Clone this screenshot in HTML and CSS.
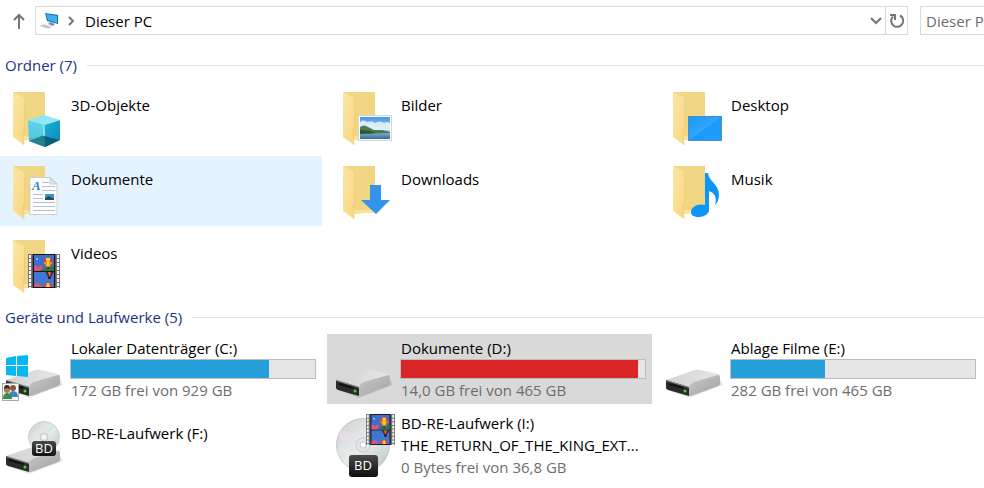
FILE: index.html
```
<!DOCTYPE html>
<html lang="de">
<head>
  <meta charset="UTF-8" />
  <meta name="viewport" content="width=device-width, initial-scale=1.0" />
  <title>Dieser PC</title>
  <link rel="stylesheet" href="styles.css">
</head>
<body>
  <!-- Shared icon parts -->
  <svg class="sprite" aria-hidden="true">
    <defs>
      <linearGradient id="folderBack" x1="0" y1="0" x2="1" y2="1">
        <stop offset="0" stop-color="#f0d688" />
        <stop offset="1" stop-color="#f1d57f" />
      </linearGradient>
      <linearGradient id="folderFlap" x1="0" y1="0" x2="1" y2="1">
        <stop offset="0" stop-color="#fce6a6" />
        <stop offset="1" stop-color="#f8d67f" />
      </linearGradient>
      <linearGradient id="driveTop" x1="0" y1="0" x2="1" y2="0">
        <stop offset="0" stop-color="#d3d3d5" />
        <stop offset="1" stop-color="#e6e6e8" />
      </linearGradient>
      <linearGradient id="driveSide" x1="0" y1="0" x2="1" y2="1">
        <stop offset="0" stop-color="#c8c8ca" />
        <stop offset="1" stop-color="#a2a2a5" />
      </linearGradient>
      <linearGradient id="disc" x1="0" y1="0" x2="1" y2="1">
        <stop offset="0" stop-color="#c6cbcb" />
        <stop offset="0.3" stop-color="#dfe2e2" />
        <stop offset="0.5" stop-color="#e9ecec" />
        <stop offset="0.8" stop-color="#cbd6d0" />
        <stop offset="1" stop-color="#b4bbba" />
      </linearGradient>
      <linearGradient id="label" x1="0" y1="0" x2="0" y2="1">
        <stop offset="0" stop-color="#4b4b4b" />
        <stop offset="0.5" stop-color="#2b2b2b" />
        <stop offset="1" stop-color="#111" />
      </linearGradient>
      <linearGradient id="sky" x1="0" y1="0" x2="0" y2="1">
        <stop offset="0" stop-color="#4a98e6" />
        <stop offset="1" stop-color="#d6ecfa" />
      </linearGradient>
      <linearGradient id="sea" x1="0" y1="0" x2="0" y2="1">
        <stop offset="0" stop-color="#8fb8cf" />
        <stop offset="1" stop-color="#2f6a95" />
      </linearGradient>
      <linearGradient id="screen" x1="0" y1="0" x2="1" y2="1">
        <stop offset="0" stop-color="#1a98f6" />
        <stop offset="0.5" stop-color="#30a6fc" />
        <stop offset="0.51" stop-color="#1c9afa" />
        <stop offset="1" stop-color="#1f9dfa" />
      </linearGradient>
      <linearGradient id="cubeLeft" x1="0" y1="0" x2="0" y2="1">
        <stop offset="0" stop-color="#5fd3ea" />
        <stop offset="0.6" stop-color="#55cbe3" />
        <stop offset="1" stop-color="#2f9aa8" />
      </linearGradient>
      <linearGradient id="cubeRight" x1="0" y1="0" x2="1" y2="1">
        <stop offset="0" stop-color="#1fb2dc" />
        <stop offset="1" stop-color="#0a86b5" />
      </linearGradient>
    </defs>

    <symbol id="folder" viewBox="0 0 66 70">
      <path d="M13 10H45V56L24 58Z" fill="url(#folderBack)" />
      <path d="M24 54H45V57H24Z" fill="#fbe29b" />
      <path d="M13 10L24 16Q25 17 25 18V48L23 49L24 63L13 55Z" fill="url(#folderFlap)" />
      <path d="M24.500 17V48L23 49L24 63" fill="none" stroke="#ecca6f" stroke-width="0.7" />
    </symbol>

    <symbol id="drive" viewBox="0 0 66 70">
      <path d="M8 56L29 64L63 51L60 45Z" fill="#000" opacity="0.1" />
      <path d="M6 46L35 36Q38 35 41 36L58 40Q60 41 60 43L30 54Z" fill="url(#driveTop)" />
      <path d="M29 53L31 50Q32 49 34 48L58 41Q60 41 60 43V50Q60 51 58 52L31 62L29 62Z" fill="url(#driveSide)" />
      <path d="M6 46L29 53V62L8 56Q6 55 6 54Z" fill="#2b2b2b" />
      <path d="M6 46L29 53V54L6 47Z" fill="#8a8a8a" />
      <path d="M9 50L23 54" stroke="#111" stroke-width="2" />
      <circle cx="25" cy="57" r="1.500" fill="#2fe02f" />
    </symbol>

    <symbol id="film" viewBox="0 0 32 34">
      <rect width="32" height="34" fill="#777" />
      <path d="M2 1V34M30 1V34" stroke="#f5f5f5" stroke-width="2" stroke-dasharray="3 1" />
      <rect x="4" y="0" width="24" height="34" fill="#5a5a5a" />
      <rect x="5" y="0" width="22" height="34" fill="#16161c" />
      <rect x="6" y="1" width="20" height="16" fill="#3a6fcb" />
      <rect x="6" y="18" width="20" height="15" fill="#3f78d4" />
      <path d="M6 12Q8 10 10 13L13 11L16 17H6Z" fill="#d9547c" />
      <path d="M14 15L20 14L26 12V17H12Z" fill="#2d7a35" />
      <path d="M6 31Q9 27 12 30L14 33H6Z" fill="#d9547c" />
      <circle cx="20" cy="8" r="4.500" fill="#e8402c" />
      <path d="M18 4H22L21 13H19Z" fill="#ffd42e" />
      <path d="M15.500 8H18L20 13H19ZM22 8H24.500L21 13H20Z" fill="#f0a01d" />
      <rect x="19" y="13" width="2" height="2" fill="#6b2d12" />
      <path d="M17.500 18H26L23 23H20Z" fill="#5a2038" />
      <path d="M20 18H23L22 22H21Z" fill="#d9742c" />
      <rect x="20" y="23" width="3" height="2" fill="#331a14" />
      <path d="M15.500 33A4.500 4.500 0 0 1 24.500 33Z" fill="#e8402c" />
      <path d="M18 33L19 29H21L22 33Z" fill="#ffd42e" />
      <circle cx="9" cy="5" r="1" fill="#b8d3f5" />
    </symbol>
  </svg>

  <header class="toolbar">
    <button class="up-btn" type="button" aria-label="Nach oben">
      <svg width="14" height="18" viewBox="0 0 14 18"><path d="M7 17V3M2 8L7 3L12 8" fill="none" stroke="#757575" stroke-width="2" /></svg>
    </button>
    <nav class="address">
      <svg class="pc-icon" width="20" height="18" viewBox="0 0 20 18">
        <path d="M6 1L19 3V12L8 9Z" fill="#1c6ea8" />
        <path d="M7 2L18 4V11L9 8Z" fill="#3bb0f5" />
        <path d="M11 10L16 12L14 14L9 12Z" fill="#7d8d99" />
        <path d="M0 14L5 12L14 15L9 17Z" fill="#d5dadd" />
        <path d="M2 14L5 13L12 15L9 16Z" fill="#b9c2c8" />
      </svg>
      <svg class="crumb-arrow" width="8" height="12" viewBox="0 0 8 12"><path d="M2 2L6 6L2 10" fill="none" stroke="#777" stroke-width="2" /></svg>
      <a class="crumb" href="#">Dieser PC</a>
      <button class="history-btn" type="button" aria-label="Vorherige Orte">
        <svg width="12" height="8" viewBox="0 0 12 8"><path d="M1 1L6 6L11 1" fill="none" stroke="#757575" stroke-width="2" /></svg>
      </button>
      <button class="refresh-btn" type="button" aria-label="Aktualisieren">
        <svg width="16" height="16" viewBox="0 0 16 16">
          <path d="M11 2.500A6 6 0 1 1 4 3.500" fill="none" stroke="#757575" stroke-width="2" />
          <path d="M1 2H6V7" fill="none" stroke="#757575" stroke-width="2" />
        </svg>
      </button>
    </nav>
    <input class="search" type="text" placeholder="Dieser PC" aria-label="Dieser PC">
  </header>

  <main>
    <section>
      <h2>Ordner (7)</h2>
      <ul class="grid folders">
        <li>
          <a class="item" href="#">
            <svg class="icon" viewBox="0 0 66 70">
              <use href="#folder" />
              <path d="M28 38L44 43L45 65L29 59Z" fill="url(#cubeLeft)" />
              <path d="M44 43L60 38V58L45 65Z" fill="url(#cubeRight)" />
              <path d="M28 38L44 33L60 38L44 43Z" fill="#8fe6f5" />
              <path d="M29 59L44 53L45 65Z" fill="#23808c" />
              <path d="M44 54L60 58L45 65Z" fill="#0b5f7c" />
              <path d="M44 43V54" stroke="#c9f4fb" stroke-width="1" />
            </svg>
            <span class="name">3D-Objekte</span>
          </a>
        </li>
        <li>
          <a class="item" href="#">
            <svg class="icon" viewBox="0 0 66 70">
              <use href="#folder" />
              <rect x="28.500" y="33.500" width="33" height="25" fill="#fff" stroke="#d3d6d9" />
              <rect x="30" y="35" width="30" height="22" fill="url(#sky)" />
              <path d="M30 40Q33 37 37 40Q42 38 45 41Q50 38 54 41Q58 39 60 41V48H30Z" fill="#f3f9fd" opacity="0.8" />
              <rect x="30" y="50" width="30" height="7" fill="url(#sea)" />
              <path d="M30 45Q34 42 38 45L44 48L52 48L60 50V51L30 52Z" fill="#4d7a52" />
              <path d="M30 48L40 49L46 51L30 52Z" fill="#2d5538" />
            </svg>
            <span class="name">Bilder</span>
          </a>
        </li>
        <li>
          <a class="item" href="#">
            <svg class="icon" viewBox="0 0 66 70">
              <use href="#folder" />
              <rect x="28.500" y="34.500" width="33" height="24" fill="url(#screen)" stroke="#4d8fc0" />
            </svg>
            <span class="name">Desktop</span>
          </a>
        </li>
        <li>
          <a class="item hover" href="#">
            <svg class="icon" viewBox="0 0 66 70">
              <use href="#folder" />
              <path d="M30 21.500H50L57 28V58.500H30Z" fill="#fdfdfd" stroke="#c3c8cc" stroke-width="0.8" />
              <path d="M50 21.500V28H57Z" fill="#e3e6e8" stroke="#b5babd" stroke-width="0.7" />
              <text class="doc-letter" x="32" y="34">A</text>
              <path d="M42 26.500H49M42 30.500H55M42 34.500H55M33 38.500H43M33 42.500H43M33 46.500H55M33 50.500H55M33 54.500H55" stroke="#b9c0c8" />
              <rect x="45" y="38" width="9" height="6" fill="#3b93d8" />
              <path d="M45 42L49 40L54 43V44H45Z" fill="#2b4d50" />
            </svg>
            <span class="name">Dokumente</span>
          </a>
        </li>
        <li>
          <a class="item" href="#">
            <svg class="icon" viewBox="0 0 66 70">
              <use href="#folder" />
              <path d="M40 29H51V44H60L46 58L31 44H40Z" fill="#3294ea" />
            </svg>
            <span class="name">Downloads</span>
          </a>
        </li>
        <li>
          <a class="item" href="#">
            <svg class="icon" viewBox="0 0 66 70">
              <use href="#folder" />
              <path d="M45 17H48C49 26 59 28 59 39Q59 45 55 49Q58 38 49 35V54C49 58 44 61 39 61C34 61 31 59 31 56C31 51 38 47 45 49Z" fill="#0c96f8" />
            </svg>
            <span class="name">Musik</span>
          </a>
        </li>
        <li>
          <a class="item" href="#">
            <svg class="icon" viewBox="0 0 66 70">
              <use href="#folder" />
              <use href="#film" x="28" y="24" width="32" height="34" />
            </svg>
            <span class="name">Videos</span>
          </a>
        </li>
      </ul>
    </section>

    <section>
      <h2>Geräte und Laufwerke (5)</h2>
      <ul class="grid drives">
        <li>
          <a class="item" href="#">
            <svg class="icon" viewBox="0 0 66 70">
              <use href="#drive" />
              <path d="M6 24L16 22V31H6ZM17 22L28 21V31H17ZM6 32H16V42L6 41ZM17 32H28V43L17 42Z" fill="#06b8f1" />
              <rect x="2.500" y="49.500" width="16" height="17" fill="#f4f6f7" stroke="#a5a8aa" />
              <circle cx="13" cy="54" r="3" fill="#8a5a3a" />
              <path d="M9 63Q9 57 13 57Q18 57 18 63Z" fill="#3c86bd" />
              <circle cx="7" cy="56" r="3" fill="#b07a55" />
              <path d="M4 55Q4 51 7 51Q10 51 10 55L7 54Z" fill="#3d2b20" />
              <path d="M3 65Q3 59 7 59Q12 59 12 65Z" fill="#3a8a56" />
            </svg>
            <div class="details">
              <span class="name">Lokaler Datenträger (C:)</span>
              <progress value="754" max="929" aria-label="Belegter Speicher C:"></progress>
              <span class="free">172 GB frei von 929 GB</span>
            </div>
          </a>
        </li>
        <li>
          <a class="item selected" href="#">
            <svg class="icon" viewBox="0 0 66 70"><use href="#drive" /></svg>
            <div class="details">
              <span class="name">Dokumente (D:)</span>
              <progress class="full" value="451" max="465" aria-label="Belegter Speicher D:"></progress>
              <span class="free">14,0 GB frei von 465 GB</span>
            </div>
          </a>
        </li>
        <li>
          <a class="item" href="#">
            <svg class="icon" viewBox="0 0 66 70"><use href="#drive" /></svg>
            <div class="details">
              <span class="name">Ablage Filme (E:)</span>
              <progress value="180" max="465" aria-label="Belegter Speicher E:"></progress>
              <span class="free">282 GB frei von 465 GB</span>
            </div>
          </a>
        </li>
        <li>
          <a class="item" href="#">
            <svg class="icon" viewBox="0 0 66 70">
              <use href="#drive" />
              <circle cx="44" cy="27" r="15.500" fill="url(#disc)" stroke="#ccd0d0" />
              <path d="M46 24L54 15" stroke="#c5ecd4" stroke-width="2" />
              <circle cx="44" cy="27" r="4" fill="#e6e8e8" stroke="#c4c7c7" />
              <circle cx="44" cy="27" r="1.500" fill="#fff" />
              <rect x="32" y="31" width="24" height="15" rx="3" fill="url(#label)" />
              <text class="bd" x="44" y="43">BD</text>
            </svg>
            <span class="name">BD-RE-Laufwerk (F:)</span>
          </a>
        </li>
        <li>
          <a class="item" href="#">
            <svg class="icon" viewBox="0 0 66 70">
              <circle cx="33" cy="35" r="26.500" fill="url(#disc)" stroke="#c6caca" />
              <path d="M8 27L27 33L28 31L12 19Z" fill="#eddcec" opacity="0.7" />
              <circle cx="33" cy="35" r="7" fill="#e3e6e6" stroke="#c6caca" />
              <circle cx="33" cy="35" r="3" fill="#fff" stroke="#c6caca" />
              <use href="#film" x="36" y="4" width="29" height="31" />
              <rect x="19" y="45" width="29" height="22" rx="3" fill="url(#label)" />
              <text class="bd" x="33" y="60">BD</text>
            </svg>
            <div class="details">
              <span class="name">BD-RE-Laufwerk (I:)</span>
              <span class="name">THE_RETURN_OF_THE_KING_EXT...</span>
              <span class="free">0 Bytes frei von 36,8 GB</span>
            </div>
          </a>
        </li>
      </ul>
    </section>
  </main>
</body>
</html>
```
FILE: styles.css
```
:root {
  --text: #000;
  --muted: #6d6d6d;
  --heading: #1e3287;
  --line: #d9d9d9;
  --bar-blue: #26a0da;
  --bar-red: #da2626;
}

* {
  box-sizing: border-box;
}

body {
  margin: 0;
  font-family: 'Open Sans', 'Noto Sans', sans-serif;
  font-size: 15px;
  line-height: 22px;
  background-color: #fff;
  color: var(--text);
}

.sprite {
  position: absolute;
  width: 0;
  height: 0;
}

button {
  display: flex;
  align-items: center;
  justify-content: center;
  padding: 0;
  border: none;
  background: none;
  cursor: pointer;
}

.toolbar {
  display: flex;
  overflow: hidden;
  padding-top: 6px;
}

.up-btn {
  width: 35px;
  padding-left: 2px;
}

.address {
  display: flex;
  flex: 1;
  align-items: center;
  height: 29px;
  border: 1px solid var(--line);
}

.pc-icon {
  margin-left: 3px;
}

.crumb-arrow {
  margin: 0 10px 0 8px;
}

.crumb {
  flex: 1;
  color: var(--text);
  text-decoration: none;
}

.history-btn {
  width: 18px;
  height: 100%;
}

.refresh-btn {
  width: 22px;
  height: 100%;
  border-left: 1px solid var(--line);
}

/* The search box has no right edge, it ends at the window */
.search {
  width: 64px;
  height: 29px;
  margin-left: 12px;
  padding: 0 0 0 5px;
  border: 1px solid var(--line);
  border-right: none;
  border-radius: 0;
  font: inherit;
}

.search::placeholder {
  color: var(--muted);
}

h2 {
  display: flex;
  align-items: center;
  gap: 10px;
  margin: 0;
  padding-left: 5px;
  font-size: 15px;
  font-weight: normal;
  line-height: 24px;
  color: var(--heading);
}

h2::after {
  content: "";
  flex: 1;
  height: 1px;
  background-color: #e2e2e2;
}

section {
  padding-top: 5px;
}

section:first-child {
  padding-top: 18px;
}

.grid {
  display: grid;
  grid-template-columns: repeat(auto-fill, 325px);
  column-gap: 5px;
  margin: 5px 0 0 -3px;
  padding: 0;
  list-style: none;
}

.folders {
  row-gap: 4px;
}

.drives {
  row-gap: 6px;
}

.item {
  display: flex;
  height: 70px;
  padding: 0 6px 0 3px;
  color: var(--text);
  text-decoration: none;
}

.item.hover {
  background-color: #e5f3ff;
}

.item.selected {
  background-color: #d9d9d9;
}

.icon {
  flex: none;
  width: 66px;
  height: 70px;
  margin-right: 4px;
}

.item > .name {
  padding-top: 12px;
}

.details {
  display: flex;
  flex: 1;
  flex-direction: column;
  justify-content: center;
  min-width: 0;
}

.name,
.free {
  padding-left: 1px;
  white-space: nowrap;
}

.free {
  color: var(--muted);
}

progress {
  -webkit-appearance: none;
  appearance: none;
  display: block;
  width: 100%;
  height: 20px;
  border: 1px solid #bcbcbc;
  background-color: #e6e6e6;
}

progress::-webkit-progress-bar {
  background-color: #e6e6e6;
}

progress::-webkit-progress-value {
  background-color: var(--bar-blue);
}

progress.full::-webkit-progress-value {
  background-color: var(--bar-red);
}

.doc-letter {
  font-family: 'Liberation Serif', serif;
  font-size: 13px;
  font-style: italic;
  font-weight: bold;
  fill: #1a83cf;
}

.bd {
  font-size: 13px;
  fill: #fff;
  text-anchor: middle;
}
```
